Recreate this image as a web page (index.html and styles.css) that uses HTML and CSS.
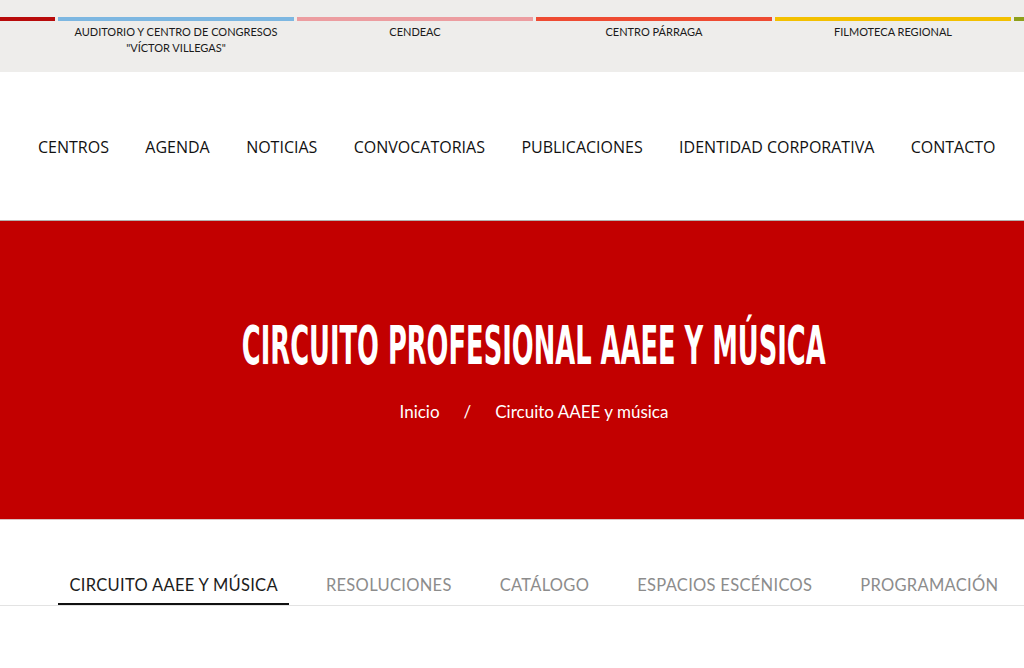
FILE: index.html
```html
<!DOCTYPE html>
<html lang="es">
<head>
<meta charset="utf-8">
<title>Circuito Profesional AAEE y Música</title>
<link rel="stylesheet" href="styles.css">
</head>
<body>
<div class="centers">
  <div class="centers-row">
    <div class="center c-red"><span class="label"></span></div>
    <div class="center c-blue"><span class="label">AUDITORIO Y CENTRO DE CONGRESOS<br>"VÍCTOR VILLEGAS"</span></div>
    <div class="center c-pink"><span class="label">CENDEAC</span></div>
    <div class="center c-orange"><span class="label">CENTRO PÁRRAGA</span></div>
    <div class="center c-yellow"><span class="label">FILMOTECA REGIONAL</span></div>
    <div class="center c-olive"><span class="label"></span></div>
  </div>
</div>
<header class="mainnav">
  <nav class="menu">
    <a href="#">CENTROS</a>
    <a href="#">AGENDA</a>
    <a href="#">NOTICIAS</a>
    <a href="#">CONVOCATORIAS</a>
    <a href="#">PUBLICACIONES</a>
    <a href="#">IDENTIDAD CORPORATIVA</a>
    <a href="#">CONTACTO</a>
  </nav>
</header>
<section class="hero">
  <h1 class="hero-title"><span>CIRCUITO PROFESIONAL AAEE Y MÚSICA</span></h1>
  <div class="crumbs"><a href="#">Inicio</a><span class="sep">/</span><span>Circuito AAEE y música</span></div>
</section>
<div class="tabs">
  <a href="#" class="tab active">CIRCUITO AAEE Y MÚSICA</a>
  <a href="#" class="tab">RESOLUCIONES</a>
  <a href="#" class="tab">CATÁLOGO</a>
  <a href="#" class="tab">ESPACIOS ESCÉNICOS</a>
  <a href="#" class="tab">PROGRAMACIÓN</a>
</div>
</body>
</html>
```
FILE: styles.css
```css
* { box-sizing: border-box; }
html, body { margin: 0; padding: 0; background: #fff; overflow: hidden; }
body { font-family: "Lato", "Open Sans", sans-serif; color: #111; }
a { text-decoration: none; color: inherit; }

.centers {
  background: #eeedeb;
  height: 72px;
  padding-top: 17px;
  overflow: hidden;
}
.centers-row {
  display: flex;
  gap: 3px;
  margin-left: -181px;
}
.center {
  flex: 0 0 236px;
  border-top: 4px solid #ccc;
  padding-top: 3px;
  text-align: center;
  font-family: "Lato", sans-serif;
  font-size: 11px;
  line-height: 16px;
  color: #1a1a1a;
}
.c-red { border-color: #b80b0b; }
.c-blue { border-color: #7db7e1; }
.c-pink { border-color: #ec9da0; }
.c-orange { border-color: #ee4b32; }
.c-yellow { border-color: #f3c000; }
.c-olive { border-color: #8e9f1a; }

.mainnav {
  height: 149px;
  display: flex;
  align-items: center;
  border-bottom: 1px solid #b4b0ae;
}
.menu {
  display: flex;
  gap: 36.4px;
  padding-left: 38px;
  padding-top: 2px;
  font-family: "Open Sans", sans-serif;
  font-size: 16px;
  color: #111;
}

.hero {
  background: #c20000;
  height: 299px;
  border-bottom: 1px solid #d9c3c3;
  color: #fff;
  text-align: center;
  padding-top: 92px;
  padding-left: 44px;
  overflow: hidden;
}
.hero-title {
  margin: 0;
  display: flex;
  justify-content: center;
  font-family: "DejaVu Sans Condensed", "DejaVu Sans", sans-serif;
  font-weight: bold;
  font-size: 54px;
  line-height: 66px;
}
.hero-title span {
  display: block;
  flex: none;
  transform: scaleX(0.53);
  white-space: nowrap;
}
.crumbs {
  font-family: "Lato", sans-serif;
  font-size: 17px;
  line-height: 24px;
  margin-top: 21px;
}
.crumbs .sep { margin: 0 24px; }

.tabs {
  display: flex;
  padding-left: 58px;
  margin-top: 53px;
  border-bottom: 1px solid #e3e3e3;
  gap: 25px;
}
.tab {
  display: block;
  padding: 0 11.5px;
  height: 32px;
  line-height: 24px;
  font-family: "Lato", sans-serif;
  font-size: 16.5px;
  color: #8c8c8c;
  letter-spacing: 0.3px;
  white-space: nowrap;
}
.tab.active {
  color: #1c1c1c;
  border-bottom: 2px solid #111;
}
```
